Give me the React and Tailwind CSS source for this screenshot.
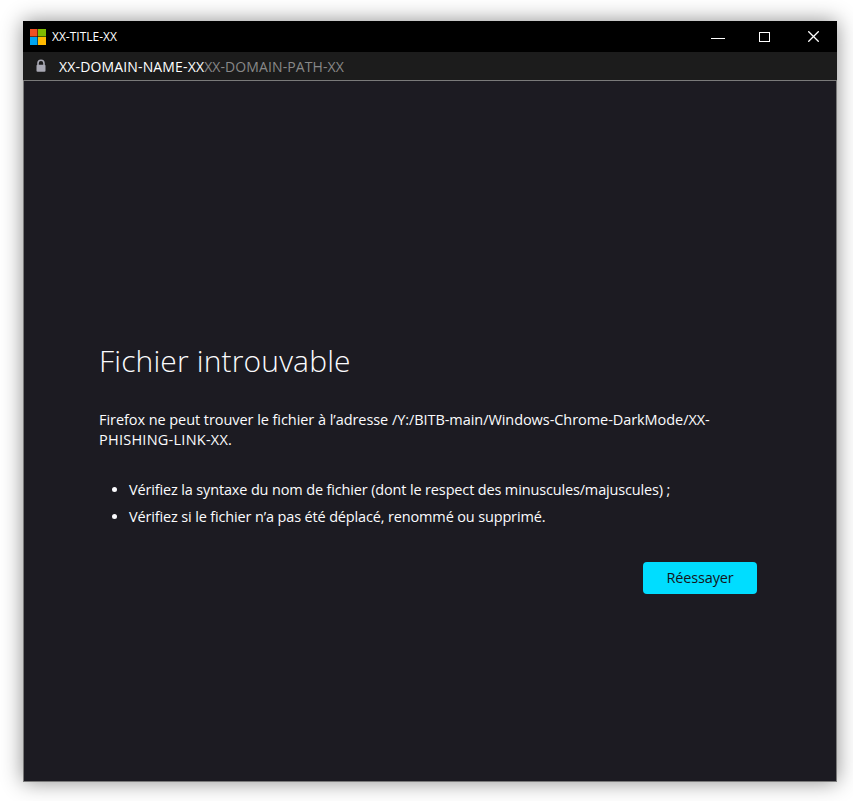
export default function App() {
  return (
    <div className="w-[853px] h-[801px] bg-white overflow-hidden pt-[21px] pl-[23px] font-['Open_Sans',sans-serif]">
      <div className="w-[814px] h-[761px] flex flex-col shadow-[0_0_20px_rgba(0,0,0,0.45)]">
        <div className="h-[31px] bg-black flex items-center text-white shrink-0">
          <svg className="ml-[7px] shrink-0" width="16" height="16" viewBox="0 0 16 16">
            <rect x="0" y="0" width="7.5" height="7.5" fill="#f25022" />
            <rect x="8" y="0" width="8" height="7.5" fill="#7fba00" />
            <rect x="0" y="8" width="7.5" height="8" fill="#00a4ef" />
            <rect x="8" y="8" width="8" height="8" fill="#ffb900" />
          </svg>
          <span className="ml-[6px] text-[12px]">XX-TITLE-XX</span>
          <div className="ml-auto flex items-center pr-[18px]">
            <svg width="14" height="13" viewBox="0 0 14 13"><path d="M0 8.5H14" stroke="#fff" strokeWidth="1" /></svg>
            <svg className="ml-[34px]" width="11" height="11" viewBox="0 0 11 11"><rect x="0.5" y="1.5" width="10" height="9" fill="none" stroke="#fff" strokeWidth="1" /></svg>
            <svg className="ml-[38px]" width="11" height="11" viewBox="0 0 11 11"><path d="M0.3 0.3L10.7 10.7M10.7 0.3L0.3 10.7" stroke="#fff" strokeWidth="1.3" /></svg>
          </div>
        </div>
        <div className="h-[28px] bg-[#1c1c1c] flex items-center shrink-0">
          <svg className="ml-[12px] shrink-0" width="12" height="14" viewBox="0 0 12 14">
            <path d="M3 6V4.2a3 3 0 0 1 6 0V6" fill="none" stroke="#a9a9b4" strokeWidth="1.6" />
            <rect x="1.5" y="5.8" width="9" height="7" rx="1" fill="#a9a9b4" />
          </svg>
          <span className="ml-[12px] text-[14px] tracking-[0.15px] text-white">XX-DOMAIN-NAME-XX</span>
          <span className="text-[14px] tracking-[0.1px] text-[#888888]">XX-DOMAIN-PATH-XX</span>
        </div>
        <div className="flex-1 bg-[#1c1b22] border border-[#7a7a7a] pl-[75px] pr-[79px] pt-[259px] text-[#fbfbfe]">
          <h1 className="text-[30px] leading-[42px] font-light tracking-[0.15px]">Fichier introuvable</h1>
          <p className="mt-[28px] text-[14.5px] leading-[20px] tracking-[-0.06px]">
            Firefox ne peut trouver le fichier à l’adresse /Y:/BITB-main/Windows-Chrome-DarkMode/XX-<span className="tracking-[0.25px]">PHISHING-LINK-XX.</span>
          </p>
          <ul className="mt-[29px] pl-[30px] list-disc text-[14.5px] leading-[21px] tracking-[-0.15px]">
            <li className="mb-[6px]">Vérifiez la syntaxe du nom de fichier (dont le respect des minuscules/majuscules) ;</li>
            <li>Vérifiez si le fichier n’a pas été déplacé, renommé ou supprimé.</li>
          </ul>
          <div className="mt-[35px] flex justify-end">
            <button className="w-[114px] h-[32px] rounded-[4px] bg-[#00ddff] text-[#15141a] text-[14.5px] tracking-[-0.15px]">Réessayer</button>
          </div>
        </div>
      </div>
    </div>
  );
}
